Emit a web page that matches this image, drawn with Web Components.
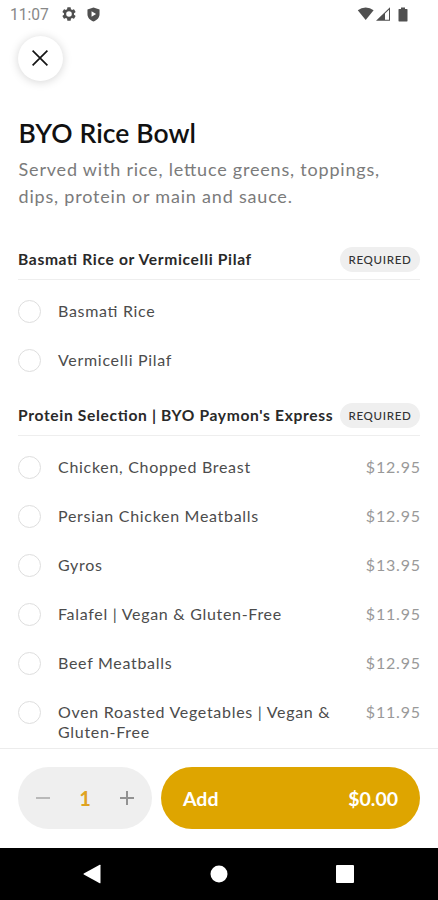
<!DOCTYPE html>
<html lang="en">
<head>
<meta charset="utf-8">
<title>BYO Rice Bowl</title>
<style>
html,body{margin:0;height:100%;background:#fff}
body{font-family:Lato,"Liberation Sans",sans-serif;font-feature-settings:"liga" 1;color:#3c3c3c;overflow:hidden}
</style>
</head>
<body>
<menu-screen></menu-screen>
<script>
const define = (name, html, setup) => customElements.define(name, class extends HTMLElement {
  constructor() {
    super();
    this.attachShadow({ mode: "open" }).innerHTML = html;
  }
  connectedCallback() { if (setup) setup(this, this.shadowRoot); }
});

define("status-bar", `<style>
:host{display:flex;align-items:center;height:28px;flex:none;padding:0 30px 0 10px;font:15.6px Roboto,sans-serif;color:#888}
svg{display:block;fill:#505050}
.time{width:51.500px;padding-top:1px}
.gear{margin-right:11px}
.right{display:flex;align-items:center;margin-left:auto}
</style>
<span class="time">11:07</span>
<svg class="gear" width="14" height="14" viewBox="2 2 20 20"><path fill-rule="evenodd" d="M19.14 12.94c.04-.3.06-.61.06-.94s-.02-.64-.07-.94l2.03-1.58a.49.49 0 0 0 .12-.61l-1.92-3.32a.49.49 0 0 0-.59-.22l-2.39.96a7 7 0 0 0-1.62-.94l-.36-2.54A.48.48 0 0 0 13.92 2.400h-3.840a.48.48 0 0 0-.47.41l-.36 2.540a7.300 7.300 0 0 0-1.620.940l-2.390-.960a.48.48 0 0 0-.590.220L2.740 8.870a.48.48 0 0 0 .120.610l2.030 1.580c-.05.3-.09.63-.09.940s.02.640.07.940l-2.030 1.580a.49.49 0 0 0-.12.610l1.920 3.320c.12.220.370.290.590.220l2.390-.960c.5.380 1.030.700 1.620.940l.360 2.540c.05.240.240.410.480.410h3.840c.240 0 .440-.170.470-.410l.360-2.540a7 7 0 0 0 1.620-.940l2.390.960c.220.080.470 0 .590-.220l1.920-3.320a.48.48 0 0 0-.120-.610zM12 16a4 4 0 1 1 0-8 4 4 0 0 1 0 8z"/></svg>
<svg width="13" height="15" viewBox="0 0 14 15"><path fill-rule="evenodd" d="M7 0l6.500 2.200v5c0 3.500-2.800 6.500-6.500 7.800C3.300 13.700.5 10.700.5 7.200v-5zM4.900 4v5.800L9.800 6.900z"/></svg>
<span class="right">
<svg width="17" height="14" viewBox="0 0 17 14"><path d="M.8 3.200a13 13 0 0 1 15.800 0L8.700 13z"/></svg>
<svg width="16" height="14" viewBox="0 0 16 14" style="margin-left:2px"><path d="M0 13.800L14 .300v13.500zM9 12.800h4V2.700l-4 3.900z" fill-rule="evenodd"/></svg>
<svg width="10" height="15" viewBox="0 0 10 15" style="margin-left:6px"><path d="M3 .5h4V2h2q.5 0 .5.700v11q0 .800-.5.800H1q-.5 0-.5-.8v-11Q.5 2 1 2h2z"/></svg>
</span>`);

define("close-button", `<style>
:host{display:flex;align-items:center;justify-content:center;box-sizing:border-box;width:45px;height:45px;padding:0 1px 1px 0;border-radius:50%;background:#fff;box-shadow:0 1px 10px rgba(0,0,0,.17)}
</style>
<svg width="16" height="16" viewBox="0 0 16 16" fill="none" stroke="#151515" stroke-width="1.7"><path d="M.6.6l14.800 14.800M15.400.6L.6 15.400"/></svg>`);

define("item-intro", `<style>
:host{display:block}
h1{margin:0;font-size:26.500px;line-height:34px;font-weight:600;letter-spacing:.1px;color:#111}
p{margin:6px 0 0;font-size:18px;line-height:27px;letter-spacing:.8px;color:#7b7b7b}
</style>
<h1><slot name="title"></slot></h1><p><slot></slot></p>`);

define("required-badge", `<style>
:host{display:flex;align-items:center;justify-content:center;width:80px;height:25px;border-radius:13px;background:#efefef;color:#333;font-size:11.600px;font-weight:500;letter-spacing:.65px;flex:none}
</style><slot>REQUIRED</slot>`);

define("option-group", `<style>
:host{display:block;margin-bottom:18px}
header{display:flex;align-items:center;justify-content:space-between;box-sizing:border-box;height:33px;padding-bottom:7px;border-bottom:1px solid #eee;margin-bottom:7px}
h2{margin:0;padding-bottom:2px;font-size:15.600px;font-weight:700;letter-spacing:.66px;color:#292929;white-space:nowrap}
</style>
<header><h2></h2><required-badge></required-badge></header><slot></slot>`,
(el, root) => { root.querySelector("h2").textContent = el.getAttribute("heading"); });

define("option-row", `<style>
:host{display:flex;align-items:flex-start;min-height:49px;box-sizing:border-box;padding-top:14px;font-size:16px;line-height:20px;letter-spacing:.7px;color:#4c4c4c}
i{box-sizing:border-box;width:23px;height:23px;border:1.500px solid #dedede;border-radius:50%;margin:-1px 17px 0 0;flex:none}
.name{width:285px}
.price{margin-left:auto;color:#999;letter-spacing:.8px;margin-right:-.8px}
</style>
<i></i><span class="name"><slot></slot></span><span class="price"></span>`,
(el, root) => { root.querySelector(".price").textContent = el.getAttribute("price") || ""; });

define("quantity-stepper", `<style>
:host{display:flex;align-items:center;justify-content:space-between;box-sizing:border-box;width:134px;height:62px;padding:0 18px;border-radius:31px;background:#efefef;flex:none}
b{font-size:20px;font-weight:700;color:#dfa321}
svg{display:block;fill:none;stroke-width:2}
</style>
<svg width="14" height="14" viewBox="0 0 14 14" stroke="#b9b9b9"><path d="M0 7h14"/></svg>
<b><slot></slot></b>
<svg width="14" height="14" viewBox="0 0 14 14" stroke="#929292"><path d="M0 7h14M7 0v14"/></svg>`);

define("add-button", `<style>
:host{display:flex;align-items:center;justify-content:space-between;box-sizing:border-box;height:62px;flex:1;padding:0 22px;border-radius:31px;background:#dea500;color:#fff;font-size:19.500px;font-weight:700}
</style><slot></slot><slot name="total"></slot>`);

define("nav-bar", `<style>
:host{display:flex;align-items:center;height:52px;flex:none;background:#000;box-sizing:border-box;padding:0 84px 0 83px;justify-content:space-between}
svg{display:block;fill:#fff}
</style>
<svg width="18" height="20" viewBox="0 0 18 20"><path d="M17.500 1.200v17.600q0 .8-.8.400L.8 10.500q-.8-.5 0-1L16.700.8q.8-.4.8.4z"/></svg>
<svg width="18" height="18" viewBox="0 0 18 18"><circle cx="9" cy="9" r="8.500"/></svg>
<svg width="18" height="18" viewBox="0 0 18 18"><rect width="18" height="18" rx="1"/></svg>`);

define("menu-screen", `<style>
:host{display:flex;flex-direction:column;width:438px;height:900px;background:#fff;overflow:hidden}
main{flex:1;min-height:0;overflow:hidden;padding:8px 18px 0}
item-intro{margin:35px 0 37px;padding-left:.6px}
footer{display:flex;gap:9px;height:100px;box-sizing:border-box;flex:none;border-top:1px solid #ececec;padding:18px 18px 0}
</style>
<status-bar></status-bar>
<main>
<close-button></close-button>
<item-intro><span slot="title">BYO Rice Bowl</span>Served with rice, lettuce greens, toppings, dips, protein or main and sauce.</item-intro>
<option-group heading="Basmati Rice or Vermicelli Pilaf">
<option-row>Basmati Rice</option-row>
<option-row>Vermicelli Pilaf</option-row>
</option-group>
<option-group heading="Protein Selection | BYO Paymon's Express">
<option-row price="$12.95">Chicken, Chopped Breast</option-row>
<option-row price="$12.95">Persian Chicken Meatballs</option-row>
<option-row price="$13.95">Gyros</option-row>
<option-row price="$11.95">Falafel | Vegan &amp; Gluten-Free</option-row>
<option-row price="$12.95">Beef Meatballs</option-row>
<option-row price="$11.95">Oven Roasted Vegetables | Vegan &amp; Gluten-Free</option-row>
</option-group>
</main>
<footer><quantity-stepper>1</quantity-stepper><add-button>Add<span slot="total">$0.00</span></add-button></footer>
<nav-bar></nav-bar>`);
</script>
</body>
</html>
